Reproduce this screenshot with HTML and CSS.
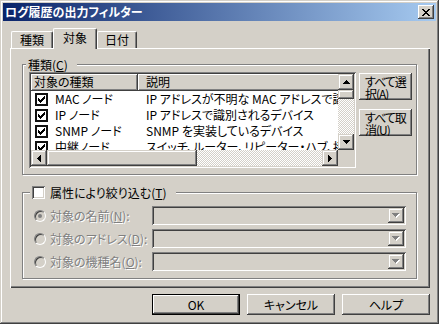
FILE: index.html
```html
<!DOCTYPE html>
<html lang="ja">
<head>
<meta charset="utf-8">
<title>ログ履歴の出力フィルター</title>
<link rel="stylesheet" href="styles.css">
</head>
<body>
<div class="window">
  <div class="titlebar">
    <span class="title">ログ履歴の出力フィルター</span>
    <button class="close" aria-label="閉じる"><svg width="8" height="7" viewBox="0 0 8 7" shape-rendering="crispEdges"><path fill="#000" d="M0 0h2v1H0zM6 0h2v1H6zM1 1h2v1H1zM5 1h2v1H5zM2 2h4v1H2zM3 3h2v1H3zM2 4h4v1H2zM1 5h2v1H1zM5 5h2v1H5zM0 6h2v1H0zM6 6h2v1H6z"/></svg></button>
  </div>
  <div class="tabs">
    <div class="tab first">種類</div>
    <div class="tab active">対象</div>
    <div class="tab last">日付</div>
  </div>
  <div class="panel">
    <div class="group kinds">
      <div class="glabel">種類(<u>C</u>)</div>
      <div class="listview">
        <div class="lv-body">
          <div class="lv-head"><div class="lh c1">対象の種類</div><div class="lh c2">説明</div></div>
          <div class="lv-row"><div class="c1"><span class="lvcb"><svg width="7" height="7" viewBox="0 0 7 7" shape-rendering="crispEdges"><path fill="#000" d="M6 0h1v1H6zM5 1h2v1H5zM0 2h1v1H0zM4 2h3v1H4zM0 3h2v1H0zM3 3h3v1H3zM0 4h5v1H0zM1 5h3v1H1zM2 6h1v1H2z"/></svg></span><span>MAC ノード</span></div><div class="c2">IP アドレスが不明な MAC アドレスで識別されるデバイス</div></div>
          <div class="lv-row"><div class="c1"><span class="lvcb"><svg width="7" height="7" viewBox="0 0 7 7" shape-rendering="crispEdges"><path fill="#000" d="M6 0h1v1H6zM5 1h2v1H5zM0 2h1v1H0zM4 2h3v1H4zM0 3h2v1H0zM3 3h3v1H3zM0 4h5v1H0zM1 5h3v1H1zM2 6h1v1H2z"/></svg></span><span>IP ノード</span></div><div class="c2">IP アドレスで識別されるデバイス</div></div>
          <div class="lv-row"><div class="c1"><span class="lvcb"><svg width="7" height="7" viewBox="0 0 7 7" shape-rendering="crispEdges"><path fill="#000" d="M6 0h1v1H6zM5 1h2v1H5zM0 2h1v1H0zM4 2h3v1H4zM0 3h2v1H0zM3 3h3v1H3zM0 4h5v1H0zM1 5h3v1H1zM2 6h1v1H2z"/></svg></span><span>SNMP ノード</span></div><div class="c2">SNMP を実装しているデバイス</div></div>
          <div class="lv-row"><div class="c1"><span class="lvcb"><svg width="7" height="7" viewBox="0 0 7 7" shape-rendering="crispEdges"><path fill="#000" d="M6 0h1v1H6zM5 1h2v1H5zM0 2h1v1H0zM4 2h3v1H4zM0 3h2v1H0zM3 3h3v1H3zM0 4h5v1H0zM1 5h3v1H1zM2 6h1v1H2z"/></svg></span><span>中継ノード</span></div><div class="c2">スイッチ、ルーター、リピーター・ハブ、接続装置</div></div>
        </div>
        <div class="vscroll">
          <div class="sbtn"><svg width="7" height="4" viewBox="0 0 7 4" shape-rendering="crispEdges"><path fill="#000" d="M3 0h1v1H3zM2 1h3v1H2zM1 2h5v1H1zM0 3h7v1H0z"/></svg></div>
          <div class="thumb vthumb"></div>
          <div class="track"></div>
          <div class="sbtn"><svg width="7" height="4" viewBox="0 0 7 4" shape-rendering="crispEdges"><path fill="#000" d="M0 0h7v1H0zM1 1h5v1H1zM2 2h3v1H2zM3 3h1v1H3z"/></svg></div>
        </div>
        <div class="hscroll">
          <div class="sbtn"><svg width="4" height="7" viewBox="0 0 4 7" shape-rendering="crispEdges"><path fill="#000" d="M0 3h1v1H0zM1 2h1v3H1zM2 1h1v5H2zM3 0h1v7H3z"/></svg></div>
          <div class="thumb hthumb"></div>
          <div class="track"></div>
          <div class="sbtn"><svg width="4" height="7" viewBox="0 0 4 7" shape-rendering="crispEdges"><path fill="#000" d="M0 0h1v7H0zM1 1h1v5H1zM2 2h1v3H2zM3 3h1v1H3z"/></svg></div>
        </div>
        <div class="corner"></div>
      </div>
      <div class="side">
        <button class="btn side-btn">すべて選<br>択(<u>A</u>)</button>
        <button class="btn side-btn">すべて取<br>消(<u>U</u>)</button>
      </div>
    </div>
    <div class="group attrs">
      <div class="glabel check-label"><span class="chk"></span><span>属性により絞り込む(<u>T</u>)</span></div>
      <div class="attr-grid">
        <div class="opt"><span class="radio on"></span><span class="dis">対象の名前(<u>N</u>):</span></div>
        <div class="combo"><div class="combo-btn"><svg width="8" height="5" viewBox="0 0 8 5" shape-rendering="crispEdges"><path fill="#fff" d="M1 1h7v1H1zM2 2h5v1H2zM3 3h3v1H3zM4 4h1v1H4z"/><path fill="#808080" d="M0 0h7v1H0zM1 1h5v1H1zM2 2h3v1H2zM3 3h1v1H3z"/></svg></div></div>
        <div class="opt"><span class="radio"></span><span class="dis">対象のアドレス(<u>D</u>):</span></div>
        <div class="combo"><div class="combo-btn"><svg width="8" height="5" viewBox="0 0 8 5" shape-rendering="crispEdges"><path fill="#fff" d="M1 1h7v1H1zM2 2h5v1H2zM3 3h3v1H3zM4 4h1v1H4z"/><path fill="#808080" d="M0 0h7v1H0zM1 1h5v1H1zM2 2h3v1H2zM3 3h1v1H3z"/></svg></div></div>
        <div class="opt"><span class="radio"></span><span class="dis">対象の機種名(<u>O</u>):</span></div>
        <div class="combo"><div class="combo-btn"><svg width="8" height="5" viewBox="0 0 8 5" shape-rendering="crispEdges"><path fill="#fff" d="M1 1h7v1H1zM2 2h5v1H2zM3 3h3v1H3zM4 4h1v1H4z"/><path fill="#808080" d="M0 0h7v1H0zM1 1h5v1H1zM2 2h3v1H2zM3 3h1v1H3z"/></svg></div></div>
      </div>
    </div>
  </div>
  <div class="buttons">
    <button class="btn dlg default">OK</button>
    <button class="btn dlg">キャンセル</button>
    <button class="btn dlg">ヘルプ</button>
  </div>
</div>
</body>
</html>
```

FILE: styles.css
```css
* { box-sizing: border-box; }
html, body { margin: 0; padding: 0; }
body {
  width: 439px;
  height: 324px;
  overflow: hidden;
  background: #d4d0c8;
  font-family: "Noto Sans CJK JP", "Noto Sans", sans-serif;
  font-size: 12px;
  color: #000;
  font-feature-settings: "palt";
}
button {
  font: inherit;
  font-feature-settings: "palt";
  color: inherit;
  border: 0;
  padding: 0;
  margin: 0;
  background: #d4d0c8;
}
u { text-decoration-thickness: 1px; text-underline-offset: 1px; }

.window {
  width: 439px;
  height: 324px;
  padding: 3px;
  background: #d4d0c8;
  box-shadow: inset -1px -1px #404040, inset 1px 1px #d4d0c8, inset -2px -2px #808080, inset 2px 2px #fff;
  display: flex;
  flex-direction: column;
}

.titlebar {
  height: 18px;
  flex: none;
  display: flex;
  align-items: center;
  padding: 0 2px;
  background: linear-gradient(to right, #0a246a, #a6caf0);
  color: #fff;
  font-weight: bold;
}
.title { flex: 1; line-height: 18px; white-space: nowrap; }
.close {
  width: 16px;
  height: 14px;
  display: flex;
  align-items: center;
  justify-content: center;
  box-shadow: inset -1px -1px #404040, inset 1px 1px #fff, inset -2px -2px #808080, inset 2px 2px #d4d0c8;
}
.close svg { display: block; }

.tabs {
  display: flex;
  align-items: flex-end;
  height: 20px;
  flex: none;
  margin: 7px 0 0 8px;
  position: relative;
  z-index: 1;
}
.tab {
  height: 17px;
  line-height: 16px;
  text-align: center;
  background: #d4d0c8;
  border-top: 1px solid #fff;
  border-left: 1px solid #fff;
  border-right: 1px solid #404040;
  box-shadow: inset -1px 0 #808080;
  border-radius: 2px 2px 0 0;
  white-space: nowrap;
}
.tab.first { width: 42px; }
.tab.active { width: 44px; height: 21px; margin-bottom: -1px; line-height: 17px; }
.tab.last { width: 40px; }

.panel {
  width: 420px;
  height: 240px;
  flex: none;
  margin-left: 7px;
  padding: 16px 13px 0 12px;
  box-shadow: inset 1px 1px #fff, inset -1px -1px #404040, inset -2px -2px #808080;
}

.group {
  position: relative;
  border: 1px solid #808080;
  box-shadow: inset 1px 1px #fff, 1px 1px #fff;
}
.glabel {
  position: absolute;
  background: #d4d0c8;
  white-space: nowrap;
  line-height: 13px;
}

.kinds {
  height: 111px;
  display: flex;
  align-items: flex-start;
  gap: 3px;
  padding: 7px 4px 0 6px;
}
.kinds .glabel { top: -7px; left: 3px; padding: 0 9px 0 2px; }

.listview {
  width: 327px;
  height: 96px;
  flex: none;
  padding: 2px;
  background: #fff;
  box-shadow: inset 1px 1px #808080, inset -1px -1px #fff, inset 2px 2px #404040, inset -2px -2px #d4d0c8;
  display: grid;
  grid-template-columns: 307px 16px;
  grid-template-rows: 76px 16px;
}
.lv-body { overflow: hidden; background: #fff; white-space: nowrap; }
.lv-head { display: flex; height: 17px; }
.lh {
  height: 17px;
  line-height: 16px;
  background: #d4d0c8;
  box-shadow: inset -1px -1px #404040, inset 1px 1px #fff, inset -2px -2px #808080;
}
.lh.c1 { width: 107px; flex: none; padding-left: 3px; }
.lh.c2 { width: 400px; flex: none; padding-left: 8px; }
.lv-row { display: flex; height: 16px; line-height: 16px; }
.lv-row .c1 { width: 107px; flex: none; display: flex; align-items: center; padding-left: 4px; gap: 7px; }
.lv-row .c2 { width: 400px; flex: none; padding-left: 8px; }
.lvcb {
  width: 13px;
  height: 13px;
  flex: none;
  border: 2px solid #111;
  background: #fff;
  display: flex;
  align-items: center;
  justify-content: center;
}
.lvcb svg { display: block; }

.vscroll { display: flex; flex-direction: column; }
.hscroll { display: flex; }
.sbtn {
  width: 16px;
  height: 16px;
  flex: none;
  display: flex;
  align-items: center;
  justify-content: center;
  background: #d4d0c8;
  box-shadow: inset -1px -1px #404040, inset 1px 1px #d4d0c8, inset -2px -2px #808080, inset 2px 2px #fff;
}
.sbtn svg { display: block; }
.thumb {
  flex: none;
  background: #d4d0c8;
  box-shadow: inset -1px -1px #404040, inset 1px 1px #d4d0c8, inset -2px -2px #808080, inset 2px 2px #fff;
}
.vthumb { height: 9px; width: 16px; }
.hthumb { width: 150px; height: 16px; }
.track {
  flex: 1;
  background: repeating-conic-gradient(#fff 0 25%, #d4d0c8 0 50%) 0 0 / 2px 2px;
}
.corner { background: #d4d0c8; }

.side { display: flex; flex-direction: column; gap: 9px; margin-top: 1px; }
.btn {
  box-shadow: inset -1px -1px #404040, inset 1px 1px #fff, inset -2px -2px #808080, inset 2px 2px #d4d0c8;
}
.side-btn {
  width: 53px;
  height: 27px;
  text-align: left;
  line-height: 12px;
  padding: 2px 0 0 6px;
  letter-spacing: -1px;
  white-space: nowrap;
  display: block;
  overflow: hidden;
}

.attrs {
  height: 87px;
  margin-top: 17px;
  padding: 13px 10px 0 11px;
}
.check-label { top: -7px; left: 7px; padding: 0 9px 0 2px; display: flex; align-items: center; gap: 5px; height: 13px; }
.chk {
  width: 13px;
  height: 13px;
  flex: none;
  background: #fff;
  box-shadow: inset 1px 1px #808080, inset -1px -1px #fff, inset 2px 2px #404040, inset -2px -2px #d4d0c8;
}
.attr-grid {
  display: grid;
  grid-template-columns: 118px 254px;
  grid-auto-rows: 19px;
  row-gap: 4px;
}
.opt { display: flex; align-items: center; gap: 4px; white-space: nowrap; }
.dis { color: #808080; text-shadow: 1px 1px #fff; }
.radio {
  width: 12px;
  height: 12px;
  flex: none;
  border-radius: 50%;
  border: 1px solid;
  border-color: #808080 #fff #fff #808080;
  background: #d4d0c8;
  box-shadow: inset 1px 1px #404040, inset -1px -1px #d4d0c8;
  display: flex;
  align-items: center;
  justify-content: center;
}
.radio.on::after {
  content: "";
  width: 4px;
  height: 4px;
  border-radius: 50%;
  background: #808080;
}
.combo {
  background: #d4d0c8;
  padding: 2px;
  display: flex;
  justify-content: flex-end;
  box-shadow: inset 1px 1px #808080, inset -1px -1px #fff, inset 2px 2px #404040, inset -2px -2px #d4d0c8;
}
.combo-btn {
  width: 16px;
  height: 15px;
  display: flex;
  align-items: center;
  justify-content: center;
  box-shadow: inset -1px -1px #404040, inset 1px 1px #d4d0c8, inset -2px -2px #808080, inset 2px 2px #fff;
}
.combo-btn svg { display: block; }

.buttons {
  display: flex;
  justify-content: flex-end;
  gap: 7px;
  margin-top: 6px;
  padding-right: 6px;
  flex: none;
}
.dlg { width: 88px; height: 21px; text-align: center; line-height: 19px; }
.dlg.default { border: 1px solid #000; }
```
